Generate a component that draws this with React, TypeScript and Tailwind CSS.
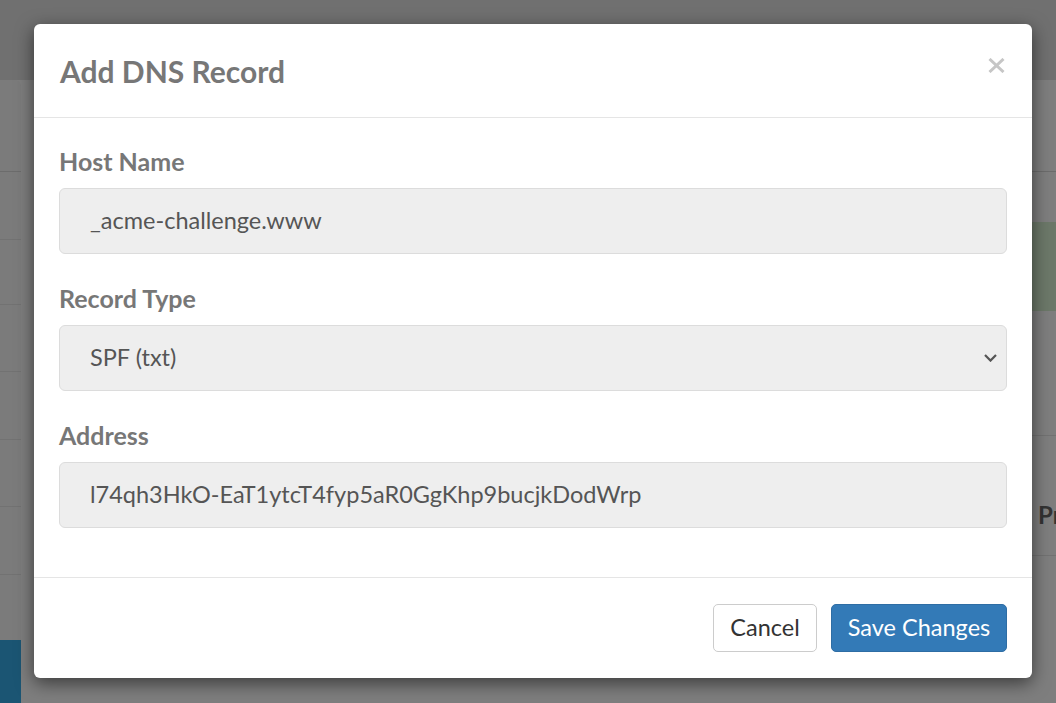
import React from "react";

// ==========================================
// Dimmed page behind the dialog
// ==========================================
function Backdrop() {
  return (
    <div className="flex h-full w-full flex-col bg-[#7e7e7e]">
      <div className="h-[80px] shrink-0 bg-[#707070]" />
      <div className="flex flex-1 justify-between">
        <div className="flex w-[21px] flex-col bg-[#7b7b7b] rounded-tr-[6px]">
          <div className="h-[92px] border-b border-[#6c6c6c]" />
          <div className="h-[68px] border-b border-[#727272]" />
          <div className="h-[65px] border-b border-[#727272]" />
          <div className="h-[67px] border-b border-[#727272]" />
          <div className="h-[68px] border-b border-[#727272]" />
          <div className="h-[67px] border-b border-[#727272]" />
          <div className="h-[68px] border-b border-[#727272]" />
          <div className="h-[65px]" />
          <div className="flex-1 bg-[#1b5573]" />
        </div>
        <div className="flex w-[24px] flex-col">
          <div className="h-[92px] border-b border-[#6c6c6c]" />
          <div className="h-[50px]" />
          <div className="h-[89px] bg-[#6c7869]" />
          <div className="h-[125px] border-b border-[#727272]" />
          <div className="h-[120px] overflow-hidden whitespace-nowrap border-b border-[#727272] pt-[62px] pl-[6px] text-[24px] font-bold leading-[34px] text-[#333]">
            Pr
          </div>
        </div>
      </div>
    </div>
  );
}

// ==========================================
// Form field
// ==========================================
interface FieldProps {
  label: string;
  children: React.ReactNode;
}

function Field({ label, children }: FieldProps) {
  return (
    <div className="mb-[27px]">
      <label className="block h-[34px] text-[25px] font-bold leading-[34px] text-[#777]">{label}</label>
      <div className="mt-[10px]">{children}</div>
    </div>
  );
}

const inputClass =
  "flex h-[66px] w-full items-center rounded-[6px] border border-[#dcdcdc] bg-[#eeeeee] pl-[30px] pr-[9px] text-[23.5px] text-[#555]";

export default function App() {
  return (
    <div className="relative h-[703px] w-[1056px] overflow-hidden font-['Lato',sans-serif]">
      <Backdrop />

      <div className="absolute left-[34px] top-[24px] flex h-[654px] w-[998px] flex-col rounded-[6px] bg-white shadow-[0_5px_18px_rgba(0,0,0,0.55)]">
        {/* header */}
        <div className="flex h-[94px] shrink-0 items-center justify-between border-b border-[#e5e5e5] pl-[26px] pr-[27px]">
          <h4 className="text-[30px] font-bold leading-[36px] text-[#777]">Add DNS Record</h4>
          <svg className="mb-[10px] h-[15px] w-[17px]" viewBox="0 0 17 15">
            <path d="M1.5 1 L15.5 14 M15.5 1 L1.5 14" stroke="#c6c6c6" strokeWidth="3" />
          </svg>
        </div>

        {/* body */}
        <div className="flex-1 px-[25px] pt-[26px]">
          <Field label="Host Name">
            <div className={inputClass}>_acme-challenge.www</div>
          </Field>
          <Field label="Record Type">
            <div className={`${inputClass} justify-between`}>
              <span>SPF (txt)</span>
              <svg className="h-[8px] w-[13px]" viewBox="0 0 13 8">
                <path d="M1 1 L6.5 6.6 L12 1" fill="none" stroke="#555" strokeWidth="2.2" />
              </svg>
            </div>
          </Field>
          <Field label="Address">
            <div className={inputClass}>l74qh3HkO-EaT1ytcT4fyp5aR0GgKhp9bucjkDodWrp</div>
          </Field>
        </div>

        {/* footer */}
        <div className="flex h-[101px] shrink-0 items-center justify-end gap-[14px] border-t border-[#e5e5e5] pr-[25px]">
          <button className="h-[48px] w-[104px] rounded-[5px] border border-[#cccccc] bg-white text-[23.5px] text-[#333]">
            Cancel
          </button>
          <button className="h-[48px] w-[176px] rounded-[5px] border border-[#2e6da4] bg-[#337ab7] text-[23.5px] text-white">
            Save Changes
          </button>
        </div>
      </div>
    </div>
  );
}
